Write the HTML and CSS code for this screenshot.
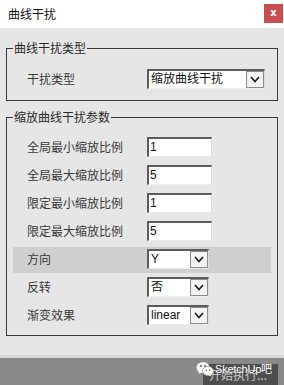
FILE: index.html
```html
<!DOCTYPE html>
<html>
<head>
<meta charset="utf-8">
<link rel="stylesheet" href="styles.css">
</head>
<body>
<div class="win">
  <div class="titlebar">
    <span class="title">曲线干扰</span>
    <span class="close">x</span>
  </div>
  <div class="main">
    <fieldset class="group g1">
      <legend>曲线干扰类型</legend>
      <div class="row r20">
        <span class="lbl">干扰类型</span>
        <div class="select wide"><span class="val">缩放曲线干扰</span><span class="btn"><svg width="10" height="7" viewBox="0 0 10 7"><polyline points="1,1 5,5.5 9,1" fill="none" stroke="#1a1a1a" stroke-width="1.6"/></svg></span></div>
      </div>
    </fieldset>
    <fieldset class="group g2">
      <legend>缩放曲线干扰参数</legend>
      <div class="row"><span class="lbl">全局最小缩放比例</span><div class="field">1</div></div>
      <div class="row"><span class="lbl">全局最大缩放比例</span><div class="field">5</div></div>
      <div class="row"><span class="lbl">限定最小缩放比例</span><div class="field">1</div></div>
      <div class="row"><span class="lbl">限定最大缩放比例</span><div class="field">5</div></div>
      <div class="row hl"><span class="lbl">方向</span><div class="select short"><span class="val">Y</span><span class="btn"><svg width="10" height="7" viewBox="0 0 10 7"><polyline points="1,1 5,5.5 9,1" fill="none" stroke="#1a1a1a" stroke-width="1.6"/></svg></span></div></div>
      <div class="row"><span class="lbl">反转</span><div class="select short"><span class="val">否</span><span class="btn"><svg width="10" height="7" viewBox="0 0 10 7"><polyline points="1,1 5,5.5 9,1" fill="none" stroke="#1a1a1a" stroke-width="1.6"/></svg></span></div></div>
      <div class="row"><span class="lbl">渐变效果</span><div class="select short"><span class="val">linear</span><span class="btn"><svg width="10" height="7" viewBox="0 0 10 7"><polyline points="1,1 5,5.5 9,1" fill="none" stroke="#1a1a1a" stroke-width="1.6"/></svg></span></div></div>
    </fieldset>
  </div>
  <div class="footer">
    <div class="run">开始执行...</div>
    <div class="wm">
      <svg class="wx" width="18" height="16" viewBox="0 0 18 16">
        <ellipse cx="7" cy="6.5" rx="6.5" ry="5.5" fill="#f2f2f2"/>
        <path d="M3 10.5 L2.5 13 L5.5 11.5 Z" fill="#f2f2f2"/>
        <ellipse cx="12" cy="10" rx="5.5" ry="4.5" fill="#ffffff" stroke="#9a9a9a" stroke-width="0.8"/>
        <path d="M14.5 13.5 L15.5 15.5 L12.5 14.2 Z" fill="#ffffff"/>
        <circle cx="5" cy="5" r="0.9" fill="#555"/>
        <circle cx="9" cy="5" r="0.9" fill="#555"/>
        <circle cx="10.3" cy="9.3" r="0.7" fill="#555"/>
        <circle cx="13.7" cy="9.3" r="0.7" fill="#555"/>
      </svg>
      <span class="wmtext">SketchUp吧</span>
    </div>
  </div>
</div>
</body>
</html>
```
FILE: styles.css
```css
* { box-sizing: border-box; }
html, body {
  margin: 0;
  padding: 0;
  background: #e5e5e5;
}
body {
  font-family: "Noto Sans CJK SC", "Microsoft YaHei", sans-serif;
  font-size: 12px;
  color: #333;
}
.win {
  width: 284px;
  height: 385px;
  overflow: hidden;
  display: flex;
  flex-direction: column;
}
.titlebar {
  height: 28px;
  background: #ffffff;
  display: flex;
  align-items: center;
  justify-content: space-between;
  padding: 0 1px 0 8px;
  flex: none;
}
.title {
  font-size: 12px;
  color: #111;
  line-height: 16px;
  margin-top: -1px;
}
.close {
  width: 19px;
  height: 19px;
  background: #c74f50;
  color: #fff;
  font-family: "DejaVu Sans", sans-serif;
  font-weight: bold;
  font-size: 10px;
  line-height: 18px;
  text-align: center;
  margin-top: -1px;
}
.main {
  height: 330px;
  flex: none;
  background: linear-gradient(to bottom, #e6e6e6 327px, #d9d9d9 327px);
  padding-top: 12px;
}
.group {
  margin: 0 6px;
  border: 1px solid #3a3a3a;
  padding: 0 6px;
  min-width: 0;
}
.group legend {
  font-size: 12px;
  line-height: 16px;
  padding: 0 1px;
  margin-left: 0;
  color: #2a2a2a;
}
.g1 {
  padding-top: 13px;
  padding-bottom: 11px;
}
.g2 {
  margin-top: 8px;
  padding-top: 8px;
  padding-bottom: 6px;
}
.row {
  display: grid;
  grid-template-columns: 134px auto;
  align-items: center;
  height: 28px;
}
.row.r20 { height: 20px; }
.row.hl {
  background: linear-gradient(to bottom, transparent 2px, #cfcfcf 2px);
}
.lbl {
  padding-left: 14px;
  color: #3a3a3a;
  line-height: 16px;
}
.field {
  width: 65px;
  height: 20px;
  background: #fff;
  border-top: 2px solid #5c5c5c;
  border-left: 2px solid #5c5c5c;
  border-right: 1px solid #dcdcdc;
  border-bottom: 1px solid #ececec;
  padding-left: 1px;
  line-height: 17px;
  font-family: "Liberation Sans", "Noto Sans CJK SC", sans-serif;
  font-size: 12px;
  color: #111;
}
.select {
  height: 20px;
  background: #fff;
  border-top: 2px solid #5c5c5c;
  border-left: 2px solid #5c5c5c;
  border-right: 1px solid #dcdcdc;
  border-bottom: 1px solid #ececec;
  display: flex;
  align-items: flex-start;
}
.select.wide { width: 118px; }
.select.short { width: 62px; }
.val {
  flex: 1;
  padding-left: 2px;
  line-height: 17px;
  font-family: "Liberation Sans", "Noto Sans CJK SC", sans-serif;
  font-size: 12px;
  color: #111;
  white-space: nowrap;
}
.btn {
  width: 18px;
  height: 17px;
  border: 1px solid #8c8c8c;
  background: #f3f3f3;
  display: flex;
  align-items: center;
  justify-content: center;
  flex: none;
}
.footer {
  flex: 1;
  background: #8a8a8a;
  display: flex;
  justify-content: flex-end;
  align-items: flex-start;
  padding: 6px 6px 0 0;
  position: relative;
}
.run {
  width: 75px;
  height: 26px;
  background: #4e4e4e;
  color: #c8c8c8;
  font-size: 12px;
  line-height: 22px;
  padding-left: 6px;
}
.wm {
  position: absolute;
  left: 196px;
  top: 3px;
  display: flex;
  align-items: center;
  gap: 1px;
}
.wmtext {
  color: #ffffff;
  font-family: "Liberation Sans", "Noto Sans CJK SC", sans-serif;
  font-size: 11px;
  line-height: 16px;
  letter-spacing: -0.2px;
  text-shadow: 0 0 1px #555;
}
```
